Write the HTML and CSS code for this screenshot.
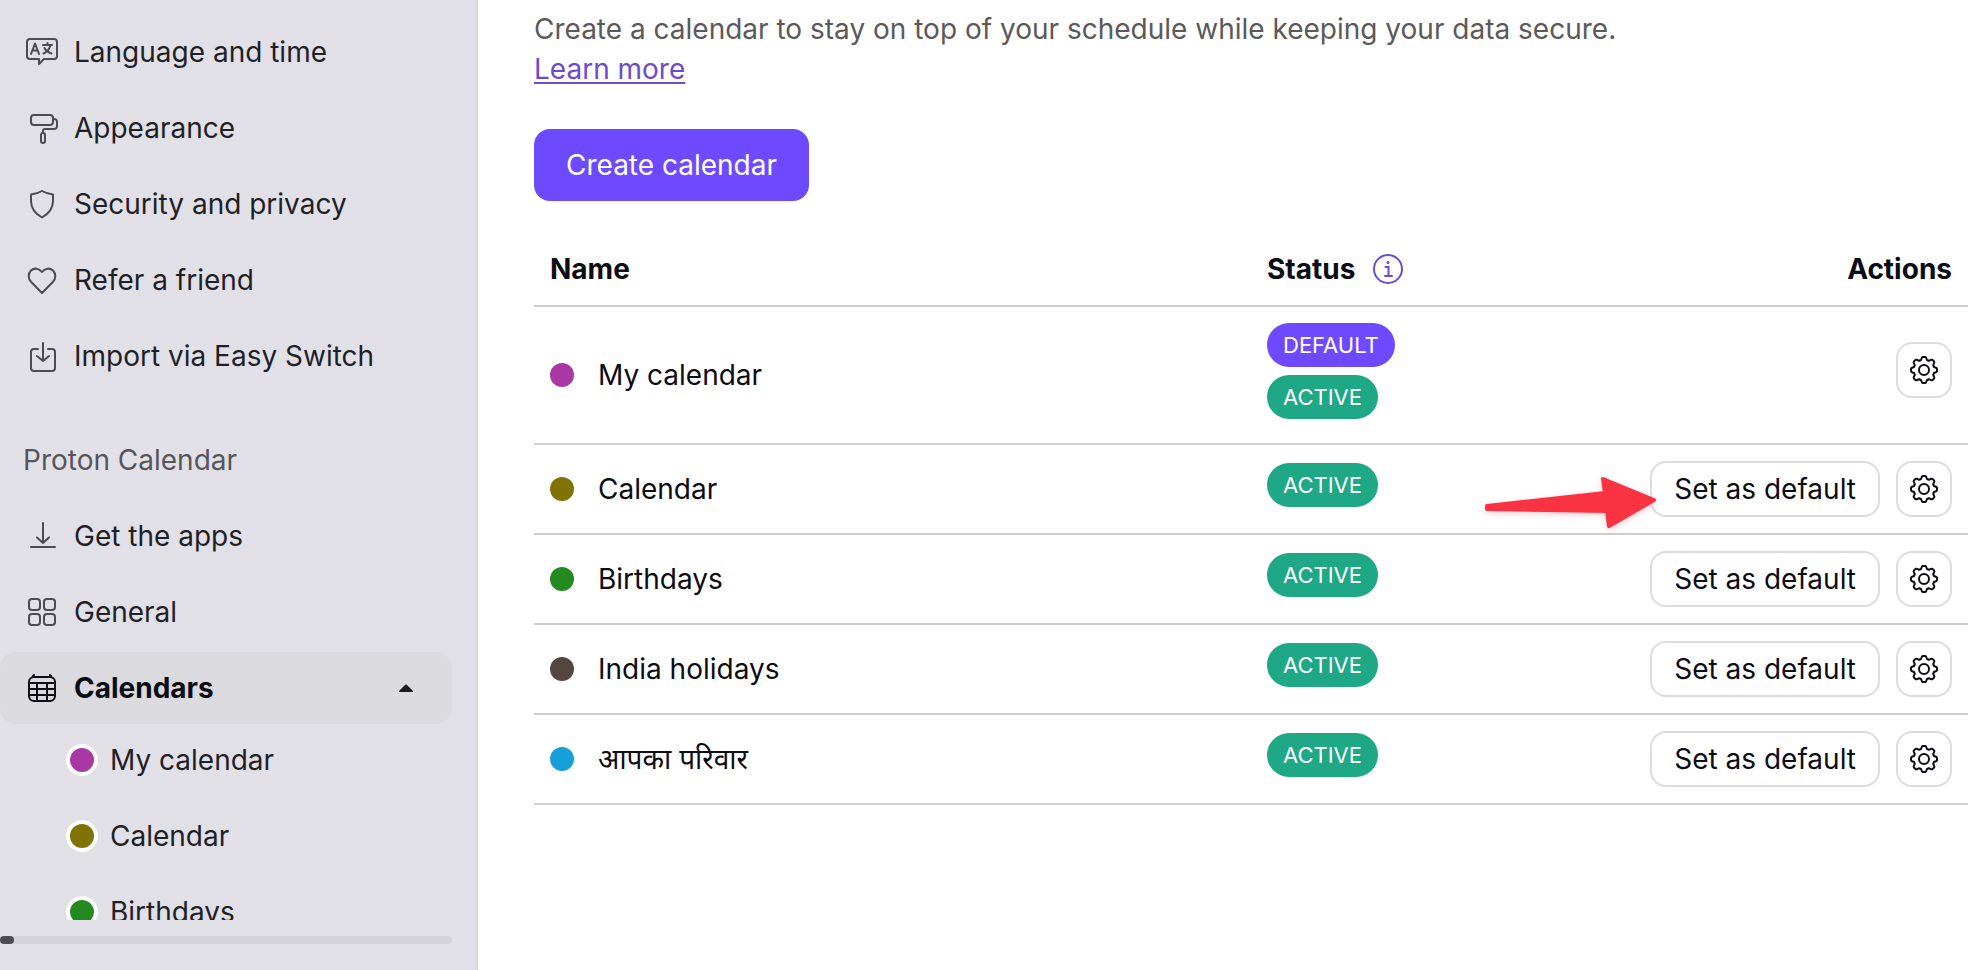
FILE: index.html
```html
<!DOCTYPE html>
<html lang="en">
<head>
<meta charset="utf-8">
<title>Calendars</title>
<link rel="stylesheet" href="styles.css">
</head>
<body>
<svg class="sprite" aria-hidden="true">
  <symbol id="gear" viewBox="0 0 32 32">
    <path d="M13 6L14 3.500Q14.300 3 15 3h2q.7 0 1 .5L19 6l1.950.8 2.400-1.100q.6-.2 1.100.2l1.650 1.650q.4.5.2 1.100L25.200 11.050 26 13l2.500 1q.5.3.5 1v2q0 .7-.5 1L26 19l-.8 1.950 1.100 2.400q.2.6-.2 1.100l-1.650 1.650q-.5.4-1.100.2L20.950 25.200 19 26l-1 2.500q-.3.5-1 .5h-2q-.7 0-1-.5L13 26l-1.950-.8-2.400 1.100q-.6.2-1.100-.2L5.900 24.450q-.4-.5-.2-1.100L6.800 20.950 6 19l-2.500-1q-.5-.3-.5-1v-2q0-.7.5-1L6 13l.8-1.950-1.100-2.400q-.2-.6.2-1.100L7.550 5.900q.5-.4 1.100-.2L11.050 6.800z"/>
    <circle cx="16" cy="16" r="5"/>
  </symbol>
</svg>
<div class="app">
  <aside class="sidebar">
    <nav class="nav">
      <a class="item" href="#"><svg class="icon" viewBox="0 0 32 32"><path d="M4 3h24a3 3 0 0 1 3 3v14a3 3 0 0 1-3 3H18l-5 5v-5H4a3 3 0 0 1-3-3V6a3 3 0 0 1 3-3zM5 18l4-10.500L13 18M6.500 14.500h5M17 9h9M21.500 7V9M24.500 9c-1 4.500-3.500 7-7 8.500M18.500 12c1.500 3 4 4.500 7 5.500"/></svg><span>Language and time</span></a>
      <a class="item" href="#"><svg class="icon" viewBox="0 0 32 32"><rect x="5" y="3" width="22" height="10" rx="3"/><path d="M27 7h1a3 3 0 0 1 3 3v4a3 3 0 0 1-3 3H19a2 2 0 0 0-2 2v2"/><rect x="15" y="21" width="4" height="10" rx="2"/></svg><span>Appearance</span></a>
      <a class="item" href="#"><svg class="icon" viewBox="0 0 32 32"><path d="M16 3c3.500 2 7 3 11 3.500v6.500c0 7-4 12.500-11 16.500-7-4-11-9.500-11-16.500V6.500C9 6 12.500 5 16 3z"/></svg><span>Security and privacy</span></a>
      <a class="item" href="#"><svg class="icon" viewBox="0 0 32 32"><path d="M16 29L5.200 18C1.800 14.500 2 9.500 5 6.500 8.200 3.500 13.200 4.200 16 8c2.800-3.800 7.800-4.500 11-1.500 3 3 3.200 8-.2 11.500z"/></svg><span>Refer a friend</span></a>
      <a class="item" href="#"><svg class="icon" viewBox="0 0 32 32"><path d="M12 9H8a3 3 0 0 0-3 3v16a3 3 0 0 0 3 3h18a3 3 0 0 0 3-3V12a3 3 0 0 0-3-3h-4M17 3v18M11 16l6 5 6-5"/></svg><span>Import via Easy Switch</span></a>
      <h2 class="section">Proton Calendar</h2>
      <a class="item" href="#"><svg class="icon" viewBox="0 0 32 32"><path d="M17 3v20M11 17.500l6 5.500 6-5.500M5 27h24"/></svg><span>Get the apps</span></a>
      <a class="item" href="#"><svg class="icon" viewBox="0 0 32 32"><rect x="3" y="3" width="11" height="11" rx="3"/><rect x="18" y="3" width="11" height="11" rx="3"/><rect x="3" y="18" width="11" height="11" rx="3"/><rect x="18" y="18" width="11" height="11" rx="3"/></svg><span>General</span></a>
      <button class="item current" type="button" aria-expanded="true"><svg class="icon" viewBox="0 0 32 32"><rect x="3" y="5" width="26" height="24" rx="5"/><path d="M7 4L8 3M25 4L24 3M3 11h26M3 17h26M3 23h26M11 11v18M21 11v18"/></svg><span>Calendars</span><svg class="caret" viewBox="0 0 14 8"><path d="M6 1Q7 0 8 1l6 6v1H0V7z"/></svg></button>
      <a class="item sub" href="#"><i class="dot purple"></i><span>My calendar</span></a>
      <a class="item sub" href="#"><i class="dot olive"></i><span>Calendar</span></a>
      <a class="item sub" href="#"><i class="dot green"></i><span>Birthdays</span></a>
    </nav>
    <div class="track"><div class="thumb"></div></div>
  </aside>
  <main class="main">
    <p class="intro">Create a calendar to stay on top of your schedule while keeping your data secure.<br><a href="#">Learn more</a></p>
    <button class="create" type="button">Create calendar</button>
    <table class="calendars">
      <thead>
        <tr><th class="name">Name</th><th class="status"><div class="label">Status<svg class="info" viewBox="0 0 32 32"><circle cx="16" cy="16" r="14"/><path d="M13.500 14h3v9M13 23h7"/><circle class="point" cx="16" cy="9.500" r="1.500"/></svg></div></th><th class="actions">Actions</th></tr>
      </thead>
      <tbody>
        <tr><td><div class="who"><i class="dot purple"></i>My calendar</div></td><td><div class="badges"><span class="badge default">DEFAULT</span><span class="badge">ACTIVE</span></div></td><td><div class="tools raised"><button class="tool" type="button" aria-label="Settings"><svg class="icon"><use href="#gear"/></svg></button></div></td></tr>
        <tr><td><div class="who"><i class="dot olive"></i>Calendar</div></td><td><div class="badges"><span class="badge">ACTIVE</span></div></td><td><div class="tools"><button class="set" type="button">Set as default</button><button class="tool" type="button" aria-label="Settings"><svg class="icon"><use href="#gear"/></svg></button><svg class="arrow" viewBox="0 0 180 60" aria-hidden="true"><path d="M7 31L125 18 123 4 174 25 129 51 127 36 7 34z"/></svg></div></td></tr>
        <tr><td><div class="who"><i class="dot green"></i>Birthdays</div></td><td><div class="badges"><span class="badge">ACTIVE</span></div></td><td><div class="tools"><button class="set" type="button">Set as default</button><button class="tool" type="button" aria-label="Settings"><svg class="icon"><use href="#gear"/></svg></button></div></td></tr>
        <tr><td><div class="who"><i class="dot brown"></i>India holidays</div></td><td><div class="badges"><span class="badge">ACTIVE</span></div></td><td><div class="tools"><button class="set" type="button">Set as default</button><button class="tool" type="button" aria-label="Settings"><svg class="icon"><use href="#gear"/></svg></button></div></td></tr>
        <tr><td><div class="who"><i class="dot blue"></i><span lang="hi">आपका परिवार</span></div></td><td><div class="badges"><span class="badge">ACTIVE</span></div></td><td><div class="tools"><button class="set" type="button">Set as default</button><button class="tool" type="button" aria-label="Settings"><svg class="icon"><use href="#gear"/></svg></button></div></td></tr>
      </tbody>
    </table>
  </main>
</div>
</body>
</html>
```
FILE: styles.css
```css
* { box-sizing: border-box; }
body {
  margin: 0;
  background: #fff;
  color: #0c0c14;
  font: 28px/40px Inter, "Noto Sans", sans-serif;
}
button { font: inherit; color: inherit; cursor: pointer; }
.sprite { display: none; }
.app { display: flex; height: 100vh; overflow: hidden; }

.sidebar {
  flex: none;
  width: 478px;
  display: flex;
  flex-direction: column;
  padding: 16px 24px 26px 0;
  background: #e1e0e6;
  border-right: 2px solid #d8d7dc;
}
.nav {
  flex: 1;
  min-height: 0;
  overflow: hidden;
  display: flex;
  flex-direction: column;
  gap: 4px;
}
.item {
  flex: none;
  display: flex;
  align-items: center;
  gap: 16px;
  height: 72px;
  padding: 0 39px 0 26px;
  border: 0;
  border-radius: 16px;
  background: none;
  color: #1f1f27;
  text-align: left;
  text-decoration: none;
}
.icon {
  flex: none;
  width: 32px;
  height: 32px;
  fill: none;
  stroke: #4c4b53;
  stroke-width: 2;
  stroke-linecap: round;
  stroke-linejoin: round;
}
.section {
  margin: 28px 0 0;
  padding: 16px 23px;
  color: #56555c;
  font-size: 28px;
  font-weight: 400;
}
.current { background: #dbdadf; color: #0c0c14; font-weight: 700; }
.current .icon { stroke: #0c0c14; }
.caret { width: 14px; height: 8px; margin-left: auto; fill: #1a1a20; }
.sub { padding-left: 66px; gap: 12px; }
.current + .sub { margin-top: -4px; }
.dot { flex: none; width: 24px; height: 24px; border-radius: 50%; }
.sub .dot { width: 32px; height: 32px; border: 4px solid #fff; }
.purple { background: #a839a4; }
.olive { background: #807304; }
.green { background: #238a20; }
.brown { background: #54473f; }
.blue { background: #179fd9; }
.track { flex: none; height: 8px; margin-top: 16px; border-radius: 4px; background: #d4d3d9; }
.thumb { width: 14px; height: 8px; border-radius: 4px; background: #4c4b53; }

.main { flex: 1; min-width: 0; padding: 9px 20px 0 56px; }
.intro { margin: 0 0 40px; color: #5c5958; }
.intro a { color: #6d4bd0; text-underline-offset: 3px; text-decoration-thickness: 2px; }
.create {
  display: block;
  height: 72px;
  padding: 0 32px;
  border: 0;
  border-radius: 16px;
  background: #6d4aff;
  color: #fff;
}
.calendars {
  width: 100%;
  margin-top: 32px;
  border-collapse: separate;
  border-spacing: 0;
  table-layout: fixed;
}
.calendars th, .calendars td { padding: 16px; border-bottom: 2px solid #cecece; text-align: left; }
.calendars th { font-weight: 700; }
.calendars .name { width: 50%; }
.calendars .status { width: 20%; }
.calendars .actions { text-align: right; }
.label, .who { display: flex; align-items: center; }
.label { gap: 17px; }
.who { gap: 24px; }
.info { width: 32px; height: 32px; fill: none; stroke: #6d4bd0; stroke-width: 2; stroke-linecap: round; }
.info .point { fill: #6d4bd0; stroke: none; }
.badges { display: flex; flex-direction: column; align-items: flex-start; gap: 8px; padding-bottom: 8px; }
.badge {
  padding: 0 16px;
  border-radius: 22px;
  background: #1ea885;
  color: #fff;
  font-size: 22px;
  line-height: 44px;
}
.default { background: #6d4aff; }
.tools { position: relative; display: flex; justify-content: flex-end; gap: 16px; }
.raised { padding-bottom: 10px; }
.set, .tool { height: 56px; border: 2px solid #dcdcdc; border-radius: 16px; background: #fff; }
.set { padding: 0 22px; }
.tool { display: flex; align-items: center; justify-content: center; width: 56px; padding: 0; }
.tool .icon { stroke: #0c0c14; }
.arrow {
  position: absolute;
  right: 292px;
  top: 14px;
  width: 180px;
  height: 60px;
  fill: #fa3343;
  stroke: #fa3343;
  stroke-width: 4;
  stroke-linejoin: round;
  filter: drop-shadow(0 2px 3px #fa334340);
}
```
